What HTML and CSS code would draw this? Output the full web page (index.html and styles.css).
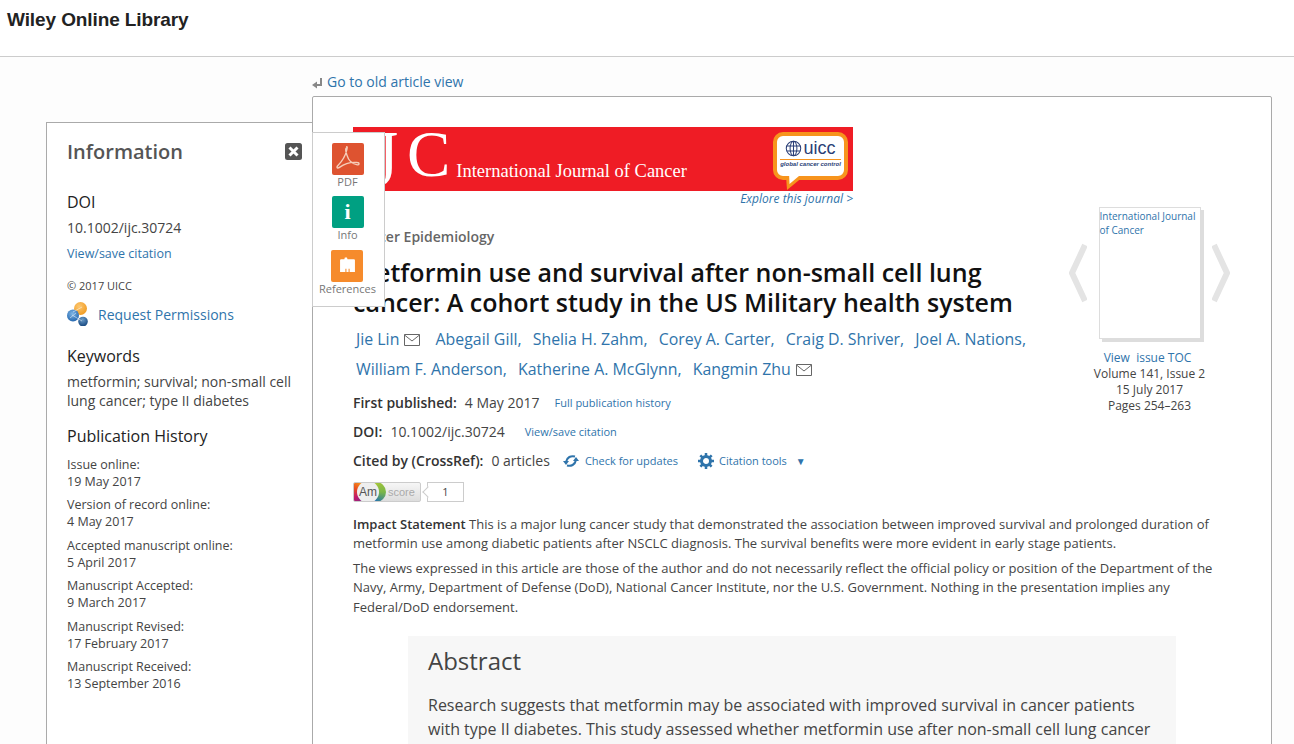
FILE: index.html
```html
<!DOCTYPE html>
<html lang="en">
<head>
<meta charset="UTF-8" />
<title>Metformin use and survival after non-small cell lung cancer</title>
<link rel="stylesheet" href="styles.css">
</head>
<body>

<header class="site-header">
  <a class="brand" href="#">Wiley Online Library</a>
</header>

<div class="page">
  <div class="old-view">
    <svg class="old-icon" viewBox="0 0 10 12" width="10" height="12"><path d="M9 1v7H4" fill="none" stroke="#888" stroke-width="2"/><path d="M5 4.500v7L0 8z" fill="#888"/></svg>
    <a href="#">Go to old article view</a>
  </div>

  <main class="article">
    <div class="journal-banner">
      <span class="ijc">I<span class="ijc-j">J</span><span class="ijc-c">C</span></span>
      <span class="journal-name">International Journal of Cancer</span>
      <div class="uicc">
        <div class="uicc-row">
          <svg viewBox="0 0 20 20" width="20" height="20"><g fill="none" stroke="#2b3f77" stroke-width="1.200"><circle cx="10" cy="10" r="8.500"/><ellipse cx="10" cy="10" rx="4" ry="8.500"/><path d="M2 7h16M2 13h16M10 1.500v17"/></g></svg>
          <span>uicc</span>
        </div>
        <div class="uicc-tag">global cancer control</div>
        <svg class="uicc-tail" viewBox="0 0 20 18" width="20" height="18"><path d="M0 4l1 14L18 4z" fill="#f7941d"/><path d="M3 0l.5 12L13 4l1-4z" fill="#fff"/></svg>
      </div>
    </div>
    <a class="explore" href="#">Explore this journal &gt;</a>

    <div class="article-top">
      <div class="article-main">
        <div class="section-name">Cancer Epidemiology</div>
        <h1>Metformin use and survival after non-small cell lung cancer: A cohort study in the US Military health system</h1>
        <div class="authors">
          <a href="#">Jie Lin</a><svg class="mail" viewBox="0 0 16 12" width="16" height="12"><path d="M.5.500h15v11H.5zM.5 1l7.500 6 7.500-6" fill="none" stroke="#666"/></svg>
          <a href="#">Abegail Gill,</a>
          <a href="#">Shelia H. Zahm,</a>
          <a href="#">Corey A. Carter,</a>
          <a href="#">Craig D. Shriver,</a>
          <a href="#">Joel A. Nations,</a>
          <a href="#">William F. Anderson,</a>
          <a href="#">Katherine A. McGlynn,</a>
          <a href="#">Kangmin Zhu</a><svg class="mail" viewBox="0 0 16 12" width="16" height="12"><path d="M.5.500h15v11H.5zM.5 1l7.500 6 7.500-6" fill="none" stroke="#666"/></svg>
        </div>
        <div class="meta-line"><b>First published:</b><span>4 May 2017</span><a href="#">Full publication history</a></div>
        <div class="meta-line doi-line"><b>DOI:</b><span>10.1002/ijc.30724</span><a href="#">View/save citation</a></div>
        <div class="meta-line cited">
          <b>Cited by (CrossRef):</b><span>0 articles</span>
          <a class="tool" href="#"><svg viewBox="0 0 16 14" width="16" height="14"><path d="M12 2.500C8 1.500 4 3 3 8M4 11.500c4 1 8-.5 9-5.500" fill="none" stroke="#2f74ab" stroke-width="2"/><path d="M0 7h6l-3 4zM16 7h-6l3-4z" fill="#2f74ab"/></svg>Check for updates</a>
          <a class="tool gear" href="#"><svg viewBox="0 0 16 16" width="16" height="16"><circle cx="8" cy="8" r="4.500" fill="none" stroke="#2f74ab" stroke-width="3"/><path d="M8 0v16M0 8h16M2.300 2.300l11.400 11.400M13.700 2.300L2.300 13.700" stroke="#2f74ab" stroke-width="2.500" stroke-dasharray="3 10"/></svg>Citation tools<span class="caret">&#9660;</span></a>
        </div>
        <div class="altmetric">
          <span class="am-badge"><span class="am-ring"><span class="am-inner">Am</span></span><span class="am-score">score</span></span>
          <span class="am-count">1</span>
        </div>
      </div>

      <aside class="cover-col">
        <div class="cover-row">
          <svg class="chev" viewBox="0 0 18 60" width="18" height="60"><path d="M16 2L3 30l13 28" fill="none" stroke="#e4e4e4" stroke-width="6"/></svg>
          <div class="cover"><a href="#">International Journal of Cancer</a></div>
          <svg class="chev" viewBox="0 0 18 60" width="18" height="60"><path d="M2 2l13 28L2 58" fill="none" stroke="#e4e4e4" stroke-width="6"/></svg>
        </div>
        <div class="issue">
          <a href="#">View&nbsp; issue TOC</a>
          <div>Volume 141, Issue 2</div>
          <div>15 July 2017</div>
          <div>Pages 254–263</div>
        </div>
      </aside>
    </div>

    <div class="statement">
      <p><b>Impact Statement</b> This is a major lung cancer study that demonstrated the association between improved survival and prolonged duration of metformin use among diabetic patients after NSCLC diagnosis. The survival benefits were more evident in early stage patients.</p>
      <p>The views expressed in this article are those of the author and do not necessarily reflect the official policy or position of the Department of the Navy, Army, Department of Defense (DoD), National Cancer Institute, nor the U.S. Government. Nothing in the presentation implies any Federal/DoD endorsement.</p>
    </div>

    <section class="abstract">
      <h2>Abstract</h2>
      <p>Research suggests that metformin may be associated with improved survival in cancer patients with type II diabetes. This study assessed whether metformin use after non-small cell lung cancer</p>
    </section>
  </main>

  <aside class="info-panel">
    <div class="info-head">
      <h2>Information</h2>
      <svg class="close" viewBox="0 0 17 17" width="17" height="17"><rect width="17" height="17" rx="2.500" fill="#555"/><path d="M4.500 4.500l8 8M12.500 4.500l-8 8" stroke="#fff" stroke-width="3"/></svg>
    </div>
    <h3 class="doi-title">DOI</h3>
    <div class="doi-value">10.1002/ijc.30724</div>
    <a class="small-link" href="#">View/save citation</a>
    <div class="copyright">© 2017 UICC</div>
    <div class="permissions">
      <svg viewBox="0 0 22 24" width="22" height="24">
        <defs>
          <radialGradient id="sph-o" cx=".4" cy=".35" r=".7"><stop offset="0" stop-color="#fcc873"/><stop offset="1" stop-color="#f19a1f"/></radialGradient>
          <radialGradient id="sph-b" cx=".45" cy=".35" r=".7"><stop offset="0" stop-color="#7fb6e6"/><stop offset="1" stop-color="#1f62ab"/></radialGradient>
          <radialGradient id="sph-d" cx=".45" cy=".3" r=".7"><stop offset="0" stop-color="#6b9cc9"/><stop offset="1" stop-color="#17487f"/></radialGradient>
        </defs>
        <circle cx="13.500" cy="6.500" r="6.500" fill="url(#sph-o)"/>
        <circle cx="6" cy="13.500" r="6" fill="url(#sph-b)"/>
        <circle cx="16" cy="19.500" r="4.800" fill="url(#sph-d)"/>
        <path d="M3 16l6-5M6 10l9-5M5 13l10 6" stroke="#fff" stroke-width=".7" opacity=".7"/>
      </svg>
      <a href="#">Request Permissions</a>
    </div>
    <h3>Keywords</h3>
    <p class="keywords">metformin; survival; non-small cell lung cancer; type II diabetes</p>
    <h3 class="history-title">Publication History</h3>
    <dl class="history">
      <dt>Issue online:</dt><dd>19 May 2017</dd>
      <dt>Version of record online:</dt><dd>4 May 2017</dd>
      <dt>Accepted manuscript online:</dt><dd>5 April 2017</dd>
      <dt>Manuscript Accepted:</dt><dd>9 March 2017</dd>
      <dt>Manuscript Revised:</dt><dd>17 February 2017</dd>
      <dt>Manuscript Received:</dt><dd>13 September 2016</dd>
    </dl>
  </aside>

  <nav class="rail">
    <a class="rail-item" href="#">
      <span class="rail-icon pdf"><svg viewBox="0 0 24 24" width="28" height="28"><path d="M11 2.500c-1.500 0-1 3 0 6 1.500 5 5 8 9 8.500 2 0 2-2 0-2-5-.5-11 1-15 4-2 1.500-3 .5-2-1 3-3 7-9 8-14 .3-1.500.5-2.500 0-2.500z" fill="none" stroke="#f6cdb9" stroke-width="1.200"/></svg></span>
      PDF
    </a>
    <a class="rail-item" href="#">
      <span class="rail-icon info">i</span>
      Info
    </a>
    <a class="rail-item" href="#">
      <span class="rail-icon refs"><svg viewBox="0 0 16 16" width="17" height="17"><path d="M1 3q0-1 1-1h3l.5-1.500h2L8 2h6q1 0 1 1v11h-5v-3H9v3H7v-3H6v3H1z" fill="#fff"/></svg></span>
      References
    </a>
  </nav>
</div>

</body>
</html>
```

FILE: styles.css
```css
/* Base */
* {
  box-sizing: border-box;
  margin: 0;
  padding: 0;
}
html, body {
  height: 744px;
  overflow: hidden;
}
body {
  font-family: 'Open Sans', sans-serif;
  font-size: 14px;
  color: #444;
  background: #fff;
}
a {
  color: #2f74ab;
  text-decoration: none;
}

/* Header */
.site-header {
  height: 57px;
  border-bottom: 1px solid #ccc;
  padding: 8px 7px 0;
}
.brand {
  font-family: 'Liberation Sans', Arial, sans-serif;
  font-weight: 700;
  font-size: 19px;
  letter-spacing: -0.1px;
  line-height: 24px;
  color: #222;
}

/* Page */
.page {
  position: relative;
  background: #fdfdfd;
  height: 687px;
  padding-left: 312px;
}
.old-view {
  height: 39px;
  padding-top: 9px;
  display: flex;
  align-items: center;
  gap: 5px;
  font-size: 14px;
  line-height: 19px;
}
.old-icon {
  margin-top: 3px;
}

/* Article */
.article {
  width: 960px;
  height: 660px;
  background: #fff;
  border: 1px solid #aaa;
  border-radius: 2px 2px 0 0;
  padding: 30px 40px 0;
}
.journal-banner {
  position: relative;
  width: 500px;
  height: 64px;
  background: #ef1c25;
  color: #fff;
  font-family: 'Liberation Serif', serif;
  display: flex;
  align-items: flex-end;
}
.ijc {
  font-size: 65px;
  line-height: 68px;
  height: 71px;
  margin: -7px 0 0 -2px;
  align-self: flex-start;
  white-space: nowrap;
  clip-path: inset(7px 0 0 0);
}
/* the J hangs below the baseline in the journal's logo */
.ijc-j {
  display: inline-block;
  transform: scaleY(1.22);
  transform-origin: 0 30%;
}
.ijc-c {
  margin-left: 9px;
}
.journal-name {
  font-size: 18.500px;
  line-height: 20px;
  margin: 0 0 10px 6px;
  white-space: nowrap;
}
.uicc {
  position: absolute;
  top: 5px;
  right: 5px;
  width: 75px;
  height: 48px;
  background: #fff;
  border: 4px solid #f7941d;
  border-radius: 10px;
  color: #2b3f77;
  font-family: 'Liberation Sans', sans-serif;
  text-align: center;
}
.uicc-row {
  display: flex;
  align-items: center;
  justify-content: center;
  gap: 1px;
  font-size: 18px;
  line-height: 20px;
  margin-top: 2px;
}
.uicc-row svg {
  width: 17px;
  height: 17px;
}
.uicc-tag {
  font-size: 6px;
  font-style: italic;
  font-weight: 700;
  line-height: 8px;
  white-space: nowrap;
  border-top: 1px solid #f7941d;
  margin: 1px 3px 0;
}
.uicc-tail {
  position: absolute;
  left: 9px;
  bottom: -14px;
}
.explore {
  display: block;
  width: 500px;
  text-align: right;
  font-size: 12px;
  font-style: italic;
  line-height: 16px;
}

.article-top {
  display: flex;
}
.article-main {
  width: 700px;
  padding-top: 20px;
}
.section-name {
  font-size: 14px;
  font-weight: 600;
  color: #666;
  line-height: 20px;
}
h1 {
  font-size: 25px;
  font-weight: 600;
  line-height: 30px;
  color: #111;
  margin-top: 10px;
  width: 680px;
}
.authors {
  font-size: 15.900px;
  line-height: 30px;
  margin: 7px 0 0 3px;
  width: 690px;
  color: #2f74ab;
}
.authors a {
  margin-right: 7px;
}
.authors a:first-child, .authors a:last-of-type {
  margin-right: 5px;
}
.mail {
  margin-right: 11px;
  vertical-align: -1px;
}
.meta-line {
  display: flex;
  align-items: center;
  line-height: 20px;
  margin-top: 8px;
  font-size: 14px;
}
.authors + .meta-line {
  margin-top: 9px;
}
.doi-line {
  margin-top: 9px;
}
.meta-line b {
  font-weight: 600;
  color: #333;
}
.meta-line span {
  margin-left: 8px;
}
.meta-line > a {
  font-size: 11px;
  margin-left: 15px;
}
.doi-line > a {
  margin-left: 20px;
}
.meta-line.cited {
  margin-top: 9px;
}
.meta-line > .tool {
  display: flex;
  align-items: center;
  gap: 6px;
  margin-left: 13px;
}
.meta-line > .gear {
  margin-left: 20px;
  gap: 5px;
}
.meta-line .caret {
  font-size: 10px;
  margin-left: 4px;
  color: #2f74ab;
}

/* Altmetric */
.altmetric {
  display: flex;
  margin-top: 11px;
  height: 20px;
}
.am-badge {
  display: flex;
  align-items: center;
  width: 68px;
  height: 20px;
  background: linear-gradient(#f6f6f6, #ddd);
  border: 1px solid #ccc;
  border-radius: 2px;
  font-family: 'Liberation Sans', sans-serif;
  font-size: 11px;
  color: #aaa;
  overflow: hidden;
}
.am-ring {
  width: 33px;
  height: 20px;
  margin: -1px;
  border-radius: 0 14px 14px 0;
  background: conic-gradient(from 0deg at 42% 50%, #d7d82a, #7ab648 25%, #1f6fb2 38%, #6b2f8f 55%, #c2186b 68%, #e8501f 80%, #f7941d 90%, #d7d82a);
  display: flex;
  align-items: center;
  padding-left: 4px;
  overflow: hidden;
}
.am-inner {
  width: 22px;
  height: 22px;
  border-radius: 50%;
  background: #eee;
  color: #555;
  font-size: 12px;
  line-height: 22px;
  text-align: center;
  flex: none;
}
.am-score {
  margin-left: 3px;
}
.am-count {
  position: relative;
  margin-left: 6px;
  width: 37px;
  height: 20px;
  border: 1px solid #ccc;
  background: #fff;
  font-size: 11px;
  line-height: 18px;
  text-align: center;
  color: #444;
}
.am-count::before {
  content: "";
  position: absolute;
  left: -4px;
  top: 5px;
  width: 7px;
  height: 7px;
  background: #fff;
  border-left: 1px solid #ccc;
  border-bottom: 1px solid #ccc;
  transform: rotate(45deg);
}

/* Cover */
.cover-col {
  width: 161px;
  margin-left: 16px;
  text-align: center;
}
.cover-row {
  display: flex;
  align-items: center;
  justify-content: space-between;
}
.cover {
  width: 102px;
  height: 132px;
  border: 1px solid #ddd;
  background: #fff;
  box-shadow: 3px 3px 0 #ddd;
  text-align: left;
  font-size: 10px;
  line-height: 14px;
  padding-top: 1px;
}
.issue {
  font-size: 12px;
  line-height: 16px;
  margin-top: 11px;
}
.issue a {
  margin-right: 4px;
}

/* Statement */
.statement {
  width: 860px;
  margin-top: 12.500px;
  font-size: 13px;
  line-height: 19.500px;
}
.statement p + p {
  margin-top: 5px;
}
.statement b {
  font-weight: 600;
  color: #333;
}

/* Abstract */
.abstract {
  width: 768px;
  margin: 18.500px 0 0 55px;
  padding: 9px 20px;
  background: #f7f7f7;
  height: 200px;
}
.abstract h2 {
  font-size: 24px;
  font-weight: 400;
  line-height: 32px;
  color: #444;
}
.abstract p {
  font-size: 16px;
  line-height: 24px;
  margin-top: 16px;
  color: #444;
}

/* Information panel */
.info-panel {
  position: absolute;
  left: 46px;
  top: 65px;
  width: 267px;
  height: 640px;
  background: #fff;
  border: 1px solid #aaa;
  padding: 0 20px;
  font-size: 12px;
}
.info-head {
  display: flex;
  align-items: center;
  justify-content: space-between;
  margin: 14px -10px 0 0;
  height: 28px;
}
.info-head h2 {
  font-size: 20px;
  font-weight: 600;
  color: #555;
}
.info-panel h3 {
  font-size: 16px;
  font-weight: 400;
  color: #222;
  line-height: 22px;
}
.info-panel .doi-title {
  margin-top: 26px;
}
.doi-value {
  font-size: 14px;
  line-height: 20px;
  margin-top: 5px;
}
.small-link {
  display: block;
  font-size: 12.500px;
  line-height: 18px;
  margin-top: 7px;
}
.copyright {
  font-size: 11px;
  line-height: 16px;
  margin-top: 15px;
}
.permissions {
  display: flex;
  align-items: center;
  gap: 9px;
  font-size: 14px;
  margin-top: 7px;
  height: 26px;
}
.info-panel .permissions + h3 {
  margin-top: 18px;
}
.keywords {
  font-size: 14px;
  line-height: 19px;
  margin-top: 5px;
}
.info-panel .history-title {
  margin-top: 15px;
}
.history {
  margin-top: 9px;
  font-size: 12.500px;
  line-height: 17px;
}
.history dd {
  margin-bottom: 6.400px;
}

/* Side rail */
.rail {
  position: absolute;
  left: 312px;
  top: 75px;
  width: 73px;
  height: 175px;
  background: #fff;
  border: 1px solid #ccc;
  padding: 10px 2px 0 0;
  display: flex;
  flex-direction: column;
  align-items: center;
  font-size: 11px;
}
.rail-item {
  display: flex;
  flex-direction: column;
  align-items: center;
  color: #777;
  line-height: 16px;
  height: 53.300px;
}
.rail-icon {
  width: 32px;
  height: 32px;
  border-radius: 2px;
  display: flex;
  align-items: center;
  justify-content: center;
  margin-bottom: -1px;
}
.pdf { background: #de5330; }
.info {
  background: #00a082;
  color: #fff;
  font-family: 'Liberation Serif', serif;
  font-size: 22px;
  font-weight: 700;
}
.refs { background: #f68b2c; }
```
